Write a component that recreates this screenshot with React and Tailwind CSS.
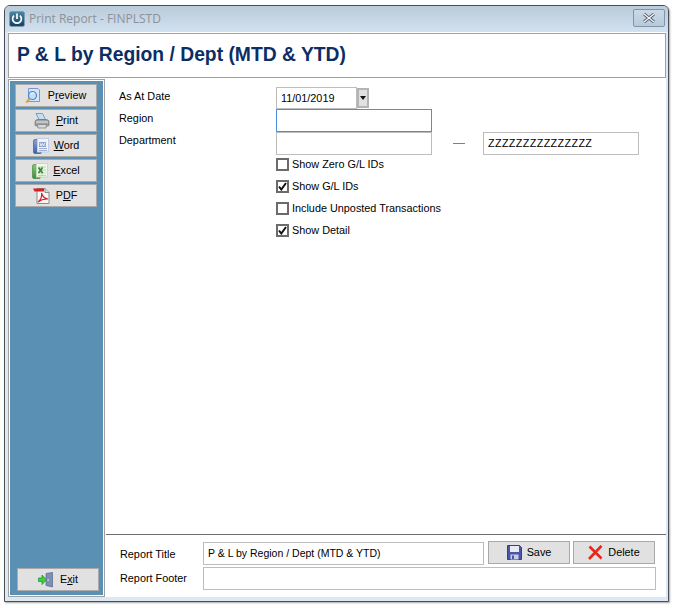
function PowerIcon() {
  return (
    <svg width="16" height="16" viewBox="0 0 16 16" className="block">
      <defs>
        <linearGradient id="pw" x1="0" y1="0" x2="0" y2="1">
          <stop offset="0" stopColor="#4a88a6" />
          <stop offset="1" stopColor="#123f5c" />
        </linearGradient>
      </defs>
      <rect x="0.5" y="0.5" width="15" height="15" rx="2" fill="url(#pw)" stroke="#7c9db2" />
      <path d="M5 4.6 A4.4 4.4 0 1 0 11 4.6" fill="none" stroke="#fff" strokeWidth="1.7" />
      <path d="M8 2.6 V8" stroke="#fff" strokeWidth="1.7" />
    </svg>
  );
}

function PreviewIcon() {
  return (
    <svg width="16" height="16" viewBox="0 0 16 16" className="block">
      <path d="M3.5 .5 H13 L14.5 2 V13.5 H3.5 Z" fill="#d8e4f8" stroke="#7d93d4" />
      <circle cx="7.5" cy="7.5" r="4" fill="#bfe3f5" stroke="#4a86c0" strokeWidth="1.2" />
      <path d="M6 6 A2.2 2.2 0 0 1 8.5 5" fill="none" stroke="#fff" strokeWidth="1" />
      <path d="M4.6 10.6 L1.2 14.6" stroke="#e0a04a" strokeWidth="2.2" />
    </svg>
  );
}

function PrintIcon() {
  return (
    <svg width="16" height="16" viewBox="0 0 16 16" className="block">
      <path d="M2 .5 L8.5 .5 L11.5 6.5 L5 6.5 Z" fill="#c5def5" stroke="#5f8fc0" strokeWidth=".8" />
      <path d="M1 9 Q1 6.5 4 6.5 H12 Q15 6.5 15 9 V12 Q15 13 13.5 13 H2.5 Q1 13 1 12 Z" fill="#9ea3a6" stroke="#6d6d6d" strokeWidth=".7" />
      <path d="M2 9 H14" stroke="#e6e6e6" />
      <path d="M3.5 11.5 H12.5 L12 15 H4 Z" fill="#d8d8d8" stroke="#7a7a7a" strokeWidth=".7" />
    </svg>
  );
}

function WordIcon() {
  return (
    <svg width="16" height="16" viewBox="0 0 16 16" className="block">
      <defs>
        <linearGradient id="wd" x1="0" y1="0" x2="0" y2="1">
          <stop offset="0" stopColor="#8aa3d8" />
          <stop offset="1" stopColor="#3f5fa8" />
        </linearGradient>
      </defs>
      <rect x=".5" y="1.5" width="8" height="14" rx="1.5" fill="url(#wd)" stroke="#2f4d8f" strokeWidth=".6" />
      <rect x="4.5" y=".5" width="11" height="13.5" fill="#eef2fa" stroke="#c2cce2" />
      <rect x="6" y="4" width="7" height="5" fill="#8da6d6" />
      <path d="M7 5 L8 8 L9.3 5.5 L10.6 8 L11.8 5" fill="none" stroke="#fff" strokeWidth=".8" />
      <path d="M6 10.5 H14 M6 12.5 H14" stroke="#9db0d3" />
    </svg>
  );
}

function ExcelIcon() {
  return (
    <svg width="16" height="16" viewBox="0 0 16 16" className="block">
      <defs>
        <linearGradient id="xl" x1="0" y1="0" x2="0" y2="1">
          <stop offset="0" stopColor="#8cc67a" />
          <stop offset="1" stopColor="#3f8f38" />
        </linearGradient>
      </defs>
      <rect x=".5" y="1.5" width="8" height="14" rx="1.5" fill="url(#xl)" stroke="#3b7f33" strokeWidth=".6" />
      <rect x="4.5" y=".5" width="11" height="13.5" fill="#f1f7ee" stroke="#c5dcbc" />
      <path d="M6 4 H14 M6 7 H14 M6 10 H14 M6 12.5 H14 M10 3 V13" stroke="#a9cf9e" strokeWidth=".8" />
      <path d="M6.5 4.5 L10.5 10 M10.5 4.5 L6.5 10" stroke="#2f8a2b" strokeWidth="1.6" />
    </svg>
  );
}

function PdfIcon() {
  return (
    <svg width="17" height="16" viewBox="0 0 17 16" className="block">
      <path d="M4 .5 H12 L16 4.5 V15.5 H4 Z" fill="#f7f7f7" stroke="#8b8b8b" />
      <path d="M12 .5 V4.5 H16" fill="#dcdcdc" stroke="#8b8b8b" />
      <path d="M0 .5 H11 V3.5 H1.5 Z" fill="#d92020" />
      <path d="M5 14 C8 11.5 9 7.5 8.5 5 C9.5 8 11.5 10.5 15 11 C11.5 10.8 8 11.5 5 14 Z" fill="none" stroke="#d92020" strokeWidth="1.1" />
    </svg>
  );
}

function ExitIcon() {
  return (
    <svg width="16" height="16" viewBox="0 0 16 16" className="block">
      <path d="M8 1.5 L14.5 .5 V15 L8 13.5 Z" fill="#7d8fb5" stroke="#56678d" strokeWidth=".7" />
      <rect x="9.5" y="7" width="1.2" height="1.8" fill="#e8e8e8" />
      <path d="M0.5 6 H4 V3 L8.5 7.8 L4 12.5 V9.5 H0.5 Z" fill="#3fd03f" stroke="#1e8a2a" strokeWidth=".7" />
    </svg>
  );
}

function SaveIcon() {
  return (
    <svg width="15" height="15" viewBox="0 0 15 15" className="block">
      <path d="M.5 .5 H12.5 L14.5 2.5 V14.5 H.5 Z" fill="#4a55a8" stroke="#353f8a" />
      <rect x="3" y="1" width="9" height="6" fill="#e8eaf4" />
      <rect x="3.5" y="9.5" width="8" height="5" fill="#c9cde4" />
      <rect x="5" y="10.5" width="2" height="3.5" fill="#4a55a8" />
    </svg>
  );
}

function DeleteIcon() {
  return (
    <svg width="15" height="15" viewBox="0 0 15 15" className="block">
      <path d="M1.5 1.5 L13.5 13.5 M13.5 .8 L1 14" stroke="#e8261a" strokeWidth="2.6" />
    </svg>
  );
}

function CheckBox({ checked, label }) {
  return (
    <div className="flex items-center h-[22px]">
      <span className="w-[13px] h-[13px] border-2 border-[#6b6b6b] bg-white flex items-center justify-center">
        {checked && (
          <svg width="9" height="9" viewBox="0 0 9 9" className="block">
            <path d="M1 4.5 L3.3 7.5 L8 1" fill="none" stroke="#111" strokeWidth="2" />
          </svg>
        )}
      </span>
      <span className="ml-[3px] text-[10.85px] leading-none text-black">{label}</span>
    </div>
  );
}

function SideButton({ icon, children, className = "" }) {
  return (
    <div className={`w-[82px] h-[23px] bg-[#e1e1e1] border border-[#a9a9a9] flex items-center justify-center text-[10.8px] text-black ${className}`}>
      {icon}
      <span>{children}</span>
    </div>
  );
}

function ActionButton({ icon, label }) {
  return (
    <div className="w-[82px] h-[23px] bg-[#e1e1e1] border border-[#a9a9a9] flex items-center justify-center gap-[5px] text-[10.85px] text-black">
      {icon}
      <span>{label}</span>
    </div>
  );
}

function Field({ className = "", children }) {
  return (
    <div className={`h-[23px] bg-white border border-[#bdbdbd] flex items-center pl-[4px] text-black ${className}`}>
      {children}
    </div>
  );
}

export default function App() {
  return (
    <div
      className="w-[673px] h-[608px] bg-white pl-[4px] pt-[5px]"
      style={{ fontFamily: '"Liberation Sans", Arial, sans-serif' }}
    >
      <div className="w-[665px] h-[597px] border border-[#4a4f55] rounded-t-[6px] bg-[#dce8f3] flex flex-col shadow-[1px_1px_2px_rgba(0,0,0,0.35)]">
        <div className="h-[26px] shrink-0 rounded-t-[5px] bg-gradient-to-b from-[#b9cad9] to-[#d3e2f0] flex items-center pl-[4px] pr-[3px]">
          <PowerIcon />
          <span className="ml-[4px] text-[12px] text-[#8c9197]" style={{ fontFamily: '"Open Sans", sans-serif' }}>Print Report - FINPLSTD</span>
          <div className="ml-auto w-[32px] h-[18px] -mt-[3px] rounded-[2px] border border-[#7f95a8] bg-gradient-to-b from-[#cbd9e6] to-[#b7cadb] flex items-center justify-center">
            <svg width="14" height="10" viewBox="0 0 14 10" className="block">
              <path d="M2 1 L12 9 M12 1 L2 9" stroke="#4c5a66" strokeWidth="3" />
              <path d="M2 1 L12 9 M12 1 L2 9" stroke="#f4f7fa" strokeWidth="1.4" />
            </svg>
          </div>
        </div>

        <div className="flex-1 ml-[3px] mr-[2px] mb-[4px] bg-white flex flex-col min-h-0">
          <div className="h-[45px] mt-[1px] shrink-0 border border-[#a0a0a0] bg-white flex items-center pl-[8px] text-[19.3px] font-bold text-[#0b2e63]">
            P &amp; L by Region / Dept (MTD &amp; YTD)
          </div>

          <div className="flex-1 flex mt-[1px] min-h-0">
            <div className="w-[97px] shrink-0 border border-[#a0a0a0] p-[1px]">
              <div className="h-full bg-[#5a90b3] pt-[3px] pb-[4px] pl-[5px] flex flex-col gap-[2px]">
                <SideButton icon={<PreviewIcon />} className="gap-[7px] pr-[1px]">P<u>r</u>eview</SideButton>
                <SideButton icon={<PrintIcon />} className="gap-[6px]"><u>P</u>rint</SideButton>
                <SideButton icon={<WordIcon />} className="gap-[5px]"><u>W</u>ord</SideButton>
                <SideButton icon={<ExcelIcon />} className="gap-[5px]"><u>E</u>xcel</SideButton>
                <SideButton icon={<PdfIcon />} className="gap-[6px] pr-[2px]">P<u>D</u>F</SideButton>
                <SideButton icon={<ExitIcon />} className="gap-[6px] mt-auto ml-[2px]">E<u>x</u>it</SideButton>
              </div>
            </div>

            <div className="flex-1 flex flex-col min-w-0 ml-[1px] -mt-[1px]">
              <div className="flex-1 pl-[13px] pt-[9px]">
                <div className="grid grid-cols-[157px_auto] text-[10.85px] text-black">
                  <div className="h-[22px] flex items-center pb-[4px]">As At Date</div>
                  <div className="flex h-[22px]">
                    <Field className="w-[81px] !h-[22px]">11/01/2019</Field>
                    <div className="w-[12px] h-[20px] mt-[1px] bg-[#e1e1e1] border-2 border-[#b4b4b4] flex items-center justify-center">
                      <svg width="6" height="4" viewBox="0 0 6 4" className="block"><path d="M0 0 H6 L3 4 Z" fill="#111" /></svg>
                    </div>
                  </div>
                  <div className="h-[23px] flex items-center pb-[5px]">Region</div>
                  <Field className="w-[156px] !border-[#4a90e2]"></Field>
                  <div className="h-[23px] flex items-center pb-[7px]">Department</div>
                  <div className="flex items-center -mt-[1px]">
                    <Field className="w-[156px]"></Field>
                    <div className="w-[12px] h-px bg-[#808080] ml-[21px] mr-[18px]"></div>
                    <Field className="w-[156px] tracking-[0.33px]">ZZZZZZZZZZZZZZZ</Field>
                  </div>
                </div>
                <div className="ml-[157px] -mt-[2px]">
                  <CheckBox label="Show Zero G/L IDs" />
                  <CheckBox checked label="Show G/L IDs" />
                  <CheckBox label="Include Unposted Transactions" />
                  <CheckBox checked label="Show Detail" />
                </div>
              </div>

              <div className="h-[63px] shrink-0 border-t border-[#6e6e6e] pl-[14px] pt-[7px] text-[10.85px] text-black">
                <div className="flex items-center h-[23px]">
                  <span className="w-[83px] pt-[1px]">Report Title</span>
                  <Field className="w-[281px] text-[10.5px]">P &amp; L by Region / Dept (MTD &amp; YTD)</Field>
                  <div className="flex gap-[3px] ml-[4px] -mt-[2px]">
                    <ActionButton icon={<SaveIcon />} label="Save" />
                    <ActionButton icon={<DeleteIcon />} label="Delete" />
                  </div>
                </div>
                <div className="flex items-center h-[23px] mt-[2px]">
                  <span className="w-[83px]">Report Footer</span>
                  <Field className="w-[453px]"></Field>
                </div>
              </div>
            </div>
          </div>
        </div>
      </div>
    </div>
  );
}
